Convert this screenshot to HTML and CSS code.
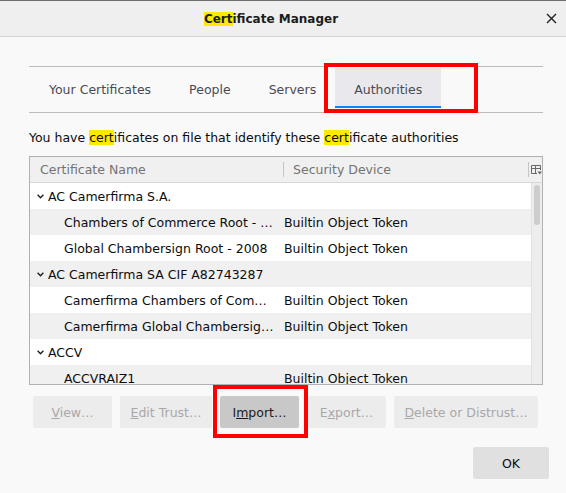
FILE: index.html
```html
<!DOCTYPE html>
<html>
<head>
<meta charset="utf-8">
<link rel="stylesheet" href="styles.css">
</head>
<body>
<div class="titlebar">
  <div class="spacer"></div>
  <div class="title"><mark>Cert</mark>ificate Manager</div>
  <div class="spacer"></div>
  <div class="close"><svg width="11" height="11" viewBox="0 0 11 11"><path d="M1 1 L10 10 M10 1 L1 10" stroke="#1f1f1f" stroke-width="1.4" fill="none"/></svg></div>
</div>
<div class="content">
  <div class="tabs">
    <div class="tab">Your Certificates</div>
    <div class="tab">People</div>
    <div class="tab">Servers</div>
    <div class="tab selected">Authorities</div>
  </div>
  <p class="intro">You have <mark>cert</mark>ificates on file that identify these <mark>cert</mark>ificate authorities</p>
  <div class="tree">
    <div class="tree-head">
      <div class="hcol1">Certificate Name</div>
      <div class="hsep"></div>
      <div class="hcol2">Security Device</div>
      <div class="hsep"></div>
      <div class="picker"><svg width="11" height="10" viewBox="0 0 11 10"><path d="M0.5 0.5 H9.5 V5 M0.5 0.5 V8.5 H6 M0.5 3.5 H9.5 M4.5 0.5 V8.5" stroke="#6a6a6a" stroke-width="1" fill="none"/><path d="M6.5 6.5 H11 L8.75 9.5 Z" fill="#6a6a6a"/></svg></div>
    </div>
    <div class="tree-body">
      <div class="rows">
        <div class="row"><div class="c1 parent"><svg class="chev" width="7" height="5" viewBox="0 0 7 5"><path d="M0.6 0.8 L3.5 3.8 L6.4 0.8" stroke="#1a1a1a" stroke-width="1.3" fill="none"/></svg><span class="txt">AC Camerfirma S.A.</span></div><div class="c2"></div></div>
        <div class="row alt"><div class="c1 child"><span class="txt">Chambers of Commerce Root - 2008</span></div><div class="c2">Builtin Object Token</div></div>
        <div class="row"><div class="c1 child"><span class="txt">Global Chambersign Root - 2008</span></div><div class="c2">Builtin Object Token</div></div>
        <div class="row alt"><div class="c1 parent"><svg class="chev" width="7" height="5" viewBox="0 0 7 5"><path d="M0.6 0.8 L3.5 3.8 L6.4 0.8" stroke="#1a1a1a" stroke-width="1.3" fill="none"/></svg><span class="txt">AC Camerfirma SA CIF A82743287</span></div><div class="c2"></div></div>
        <div class="row"><div class="c1 child"><span class="txt">Camerfirma Chambers of Commerce Root</span></div><div class="c2">Builtin Object Token</div></div>
        <div class="row alt"><div class="c1 child"><span class="txt">Camerfirma Global Chambersign Root</span></div><div class="c2">Builtin Object Token</div></div>
        <div class="row"><div class="c1 parent"><svg class="chev" width="7" height="5" viewBox="0 0 7 5"><path d="M0.6 0.8 L3.5 3.8 L6.4 0.8" stroke="#1a1a1a" stroke-width="1.3" fill="none"/></svg><span class="txt">ACCV</span></div><div class="c2"></div></div>
        <div class="row alt"><div class="c1 child"><span class="txt">ACCVRAIZ1</span></div><div class="c2">Builtin Object Token</div></div>
      </div>
      <div class="scrollbar"><div class="thumb"></div></div>
    </div>
  </div>
  <div class="buttons">
    <button class="btn disabled"><u>V</u>iew…</button>
    <button class="btn disabled"><u>E</u>dit Trust…</button>
    <button class="btn active">I<u>m</u>port…</button>
    <button class="btn disabled">E<u>x</u>port…</button>
    <button class="btn disabled"><u>D</u>elete or Distrust…</button>
  </div>
  <div class="footer">
    <button class="ok">OK</button>
  </div>
</div>
<div class="annot annot-tab"></div>
<div class="annot annot-import"></div>
</body>
</html>
```
FILE: styles.css
```css
html, body {
  margin: 0;
  padding: 0;
}
body {
  width: 566px;
  height: 493px;
  background: #f9f9fa;
  font-family: "DejaVu Sans", sans-serif;
  font-size: 12.5px;
  color: #0c0c0d;
  position: relative;
  overflow: hidden;
}
mark {
  background: #ffe900;
  color: inherit;
}
.titlebar {
  display: flex;
  align-items: center;
  height: 35px;
  border-top: 1px solid #6f6f6f;
  border-bottom: 1px solid #d4d4d6;
  background: #efefef;
}
.spacer {
  flex: 1;
}
.title {
  font-weight: bold;
  font-size: 12px;
  color: #1c1c1c;
  line-height: 14px;
}
.close {
  width: 24px;
  box-sizing: border-box;
  padding-left: 4px;
  display: flex;
  align-items: center;
}
.tabs {
  display: flex;
  align-items: flex-start;
  margin: 29px 23px 0 29px;
  height: 44px;
  padding: 1px 0 0 1px;
  border-top: 1px solid #bcbcbf;
  border-bottom: 1px solid #bcbcbf;
}
.tab {
  height: 40px;
  box-sizing: border-box;
  padding: 2px 19px 0;
  display: flex;
  align-items: center;
  color: #4a4a52;
}
.tab.selected {
  background: #e9e9ed;
  box-shadow: inset 0 -2px 0 #0a84ff;
}
.intro {
  margin: 17px 0 10px 29px;
  line-height: 16px;
}
.tree {
  margin: 0 23px 0 29px;
  border: 1px solid #b1b1b3;
  background: #fff;
}
.tree-head {
  display: flex;
  align-items: center;
  height: 25px;
  border-bottom: 1px solid #d7d7db;
  background: #f0f0f0;
  color: #737373;
}
.hcol1 {
  width: 253px;
  box-sizing: border-box;
  padding-left: 10px;
}
.hsep {
  width: 1px;
  height: 15px;
  background: #c4c4c6;
}
.hcol2 {
  flex: 1;
  padding-left: 9px;
}
.picker {
  width: 13px;
  box-sizing: border-box;
  padding-left: 2px;
  display: flex;
  align-items: center;
}
.tree-body {
  display: flex;
  height: 201px;
  overflow: hidden;
}
.rows {
  flex: 1;
}
.row {
  display: flex;
  align-items: center;
  height: 26px;
  background: #ffffff;
}
.row.alt {
  background: #f0f0f0;
}
.c1 {
  width: 251px;
  box-sizing: border-box;
  display: flex;
  align-items: center;
  padding-right: 7px;
  overflow: hidden;
}
.c1.parent {
  padding-left: 7px;
}
.c1.child {
  padding-left: 34px;
}
.chev {
  flex: none;
  margin-right: 4px;
}
.txt {
  white-space: nowrap;
  overflow: hidden;
  text-overflow: ellipsis;
}
.c2 {
  padding-left: 3px;
  white-space: nowrap;
}
.scrollbar {
  width: 11px;
  background: #ededed;
  border-left: 1px solid #e2e2e2;
  box-sizing: border-box;
  padding-top: 2px;
}
.thumb {
  width: 6px;
  height: 40px;
  margin-left: 2px;
  border-radius: 3px;
  background: #cdcdcd;
}
.buttons {
  display: flex;
  gap: 8px;
  margin: 11px 0 0 33px;
}
.btn, .ok {
  font-family: "DejaVu Sans", sans-serif;
  font-size: 12.5px;
  height: 32px;
  min-width: 79px;
  padding: 0 10.5px;
  border: none;
  border-radius: 2px;
  margin: 0;
}
.btn.disabled {
  background: #ececec;
  color: #a8a8a8;
}
.btn.active {
  background: #c8c8c8;
  color: #1a1a1a;
}
.footer {
  display: flex;
  justify-content: flex-end;
  margin: 19px 17px 0 0;
}
.ok {
  min-width: 76px;
  background: #e0e0e1;
  color: #0c0c0d;
}
.annot {
  position: absolute;
  border: 4px solid #ff0000;
  box-sizing: border-box;
}
.annot-tab {
  left: 324px;
  top: 63px;
  width: 154px;
  height: 50px;
}
.annot-import {
  left: 213px;
  top: 385px;
  width: 95px;
  height: 53px;
}
```
